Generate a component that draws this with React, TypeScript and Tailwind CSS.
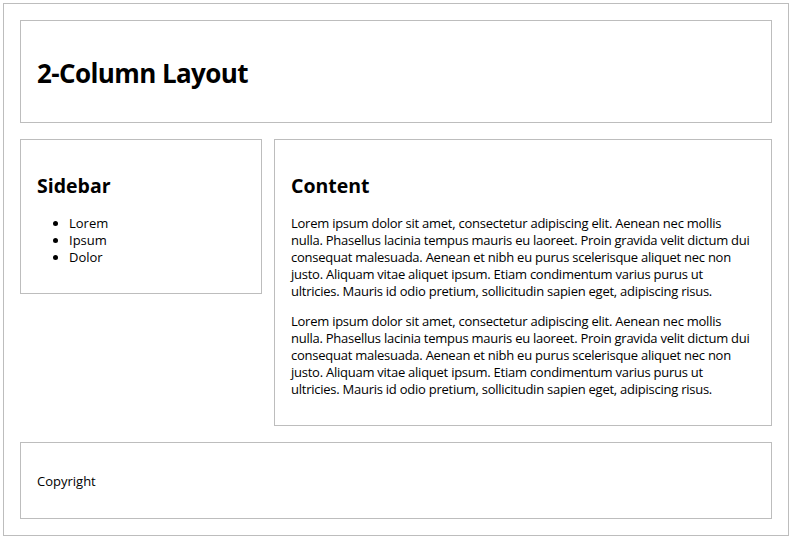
import React from "react";

// line breaks follow the reference rendering
const lorem = [
  "Lorem ipsum dolor sit amet, consectetur adipiscing elit. Aenean nec mollis",
  "nulla. Phasellus lacinia tempus mauris eu laoreet. Proin gravida velit dictum dui",
  "consequat malesuada. Aenean et nibh eu purus scelerisque aliquet nec non",
  "justo. Aliquam vitae aliquet ipsum. Etiam condimentum varius purus ut",
  "ultricies. Mauris id odio pretium, sollicitudin sapien eget, adipiscing risus.",
];

function Lorem() {
  return (
    <>
      {lorem.map((line, i) => (
        <React.Fragment key={i}>
          {line}
          {i < lorem.length - 1 && <br />}
        </React.Fragment>
      ))}
    </>
  );
}

export default function App() {
  return (
    <div className="bg-white w-[796px] h-[542px] pt-[3px] pl-[3px] text-[13px] leading-[17px] text-black font-['Open_Sans',sans-serif]">
      {/* Page wrapper */}
      <div className="w-[786px] border border-[#bdbdbd] p-4 flex flex-col gap-4">
        {/* Header */}
        <header className="border border-[#bdbdbd] px-4 py-4">
          <h1 className="text-[26px] leading-[35px] font-bold mt-[19px] mb-[15px] tracking-[-0.6px]">2-Column Layout</h1>
        </header>

        {/* Two columns */}
        <div className="flex items-start gap-3">
          <aside className="w-[242px] shrink-0 border border-[#bdbdbd] p-4">
            <h2 className="text-[19.5px] leading-[26px] font-bold mt-[17px] mb-[16px]">Sidebar</h2>
            <ul className="list-disc pl-[32px] mt-[13px] mb-[11px]">
              <li>Lorem</li>
              <li>Ipsum</li>
              <li>Dolor</li>
            </ul>
          </aside>

          <main className="flex-1 border border-[#bdbdbd] p-4">
            <h2 className="text-[19.5px] leading-[26px] font-bold mt-[17px] mb-[16px]">Content</h2>
            <p className="my-[13px] tracking-[-0.25px] whitespace-nowrap">
              <Lorem />
            </p>
            <p className="mt-[13px] mb-[11px] tracking-[-0.25px] whitespace-nowrap">
              <Lorem />
            </p>
          </main>
        </div>

        {/* Footer */}
        <footer className="border border-[#bdbdbd] px-4 py-4">
          <p className="mt-[14px] mb-[12px]">Copyright</p>
        </footer>
      </div>
    </div>
  );
}
